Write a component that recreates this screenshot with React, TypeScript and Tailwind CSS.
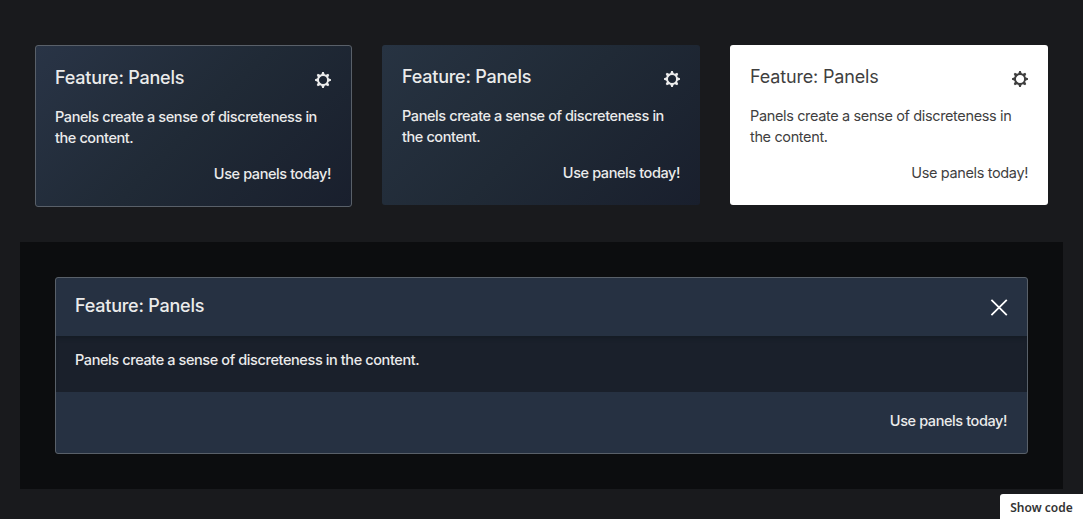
import React from 'react';

function Gear() {
  return (
    <svg width="16" height="16" viewBox="0 0 16 16" fill="none" className="block">
      <circle cx="8" cy="8" r="5" stroke="currentColor" strokeWidth="1.9" />
      {[0, 45, 90, 135, 180, 225, 270, 315].map((a) => (
        <path key={a} d="M6 3.4 7.2 0h1.6L10 3.4Z" fill="currentColor" transform={`rotate(${a} 8 8)`} />
      ))}
    </svg>
  );
}

function Card({ tone, title, body }: { tone: string; title: string; body: string }) {
  return (
    <section className={`flex-1 rounded-[3px] ${tone}`}>
      <header className="flex h-[22px] justify-between">
        <h2 className={`text-[18px] leading-6 whitespace-nowrap ${title}`}>Feature: Panels</h2>
        <div className="pt-[5.5px]">
          <Gear />
        </div>
      </header>
      <p className={`mt-[18px] text-[14.5px] leading-[21px] whitespace-nowrap ${body}`}>
        Panels create a sense of discreteness in
        <br />
        the content.
      </p>
      <p className={`mt-[15px] text-right text-[14.5px] leading-[21px] ${body}`}>Use panels today!</p>
    </section>
  );
}

export default function App() {
  return (
    <main className="relative h-[519px] overflow-hidden bg-[#191a1d] px-5 pt-[45px] font-['Inter',sans-serif] text-[#ebebeb]">
      <div className="flex items-start gap-[30px] px-[15px]">
        <Card
          tone="h-[162px] max-w-[317px] border border-[#596069] bg-linear-[135deg,#293446_0%,#202a36_50%,#191f2d_100%] pt-5 pr-5 pl-[19px] font-medium"
          title="tracking-[-0.23px]"
          body="tracking-[-0.41px]"
        />
        <Card
          tone="h-40 bg-linear-[135deg,#273342_0%,#202a36_50%,#191f2d_100%] p-5 font-medium"
          title="tracking-[-0.23px]"
          body="tracking-[-0.41px]"
        />
        <Card tone="h-40 bg-white p-5 text-[#3f3f3f]" title="tracking-[-0.16px]" body="tracking-[-0.36px]" />
      </div>
      <div className="mt-[35px] h-[247px] bg-[#0c0d0f] p-[35px] font-medium">
        <section className="h-[177px] overflow-hidden rounded-[3px] border border-[#596069] bg-[#263142]">
          <header className="flex h-[58px] justify-between px-[19px] pt-4">
            <h2 className="text-[18px] leading-6 tracking-[-0.23px]">Feature: Panels</h2>
            <svg width="18" height="18" viewBox="0 0 18 18" className="mt-1" stroke="white" strokeWidth="1.8">
              <path d="m1.4 1.8 15.4 15.4M16.8 1.8 1.4 17.2" />
            </svg>
          </header>
          <p className="h-14 bg-[#1a202b] px-[19px] pt-[13px] text-[14.5px] leading-[21px] tracking-[-0.4px] shadow-[inset_0_4px_4px_-2px_#151b25]">
            Panels create a sense of discreteness in the content.
          </p>
          <p className="px-5 pt-[18px] text-right text-[14.5px] leading-[21px] tracking-[-0.41px]">Use panels today!</p>
        </section>
      </div>
      <button className="absolute right-0 bottom-0 h-[25px] w-[83px] rounded-tl-[3px] bg-white pt-[3px] font-['Noto_Sans','Open_Sans',sans-serif] text-[12px] leading-4 font-semibold text-[#333]">
        Show code
      </button>
    </main>
  );
}
